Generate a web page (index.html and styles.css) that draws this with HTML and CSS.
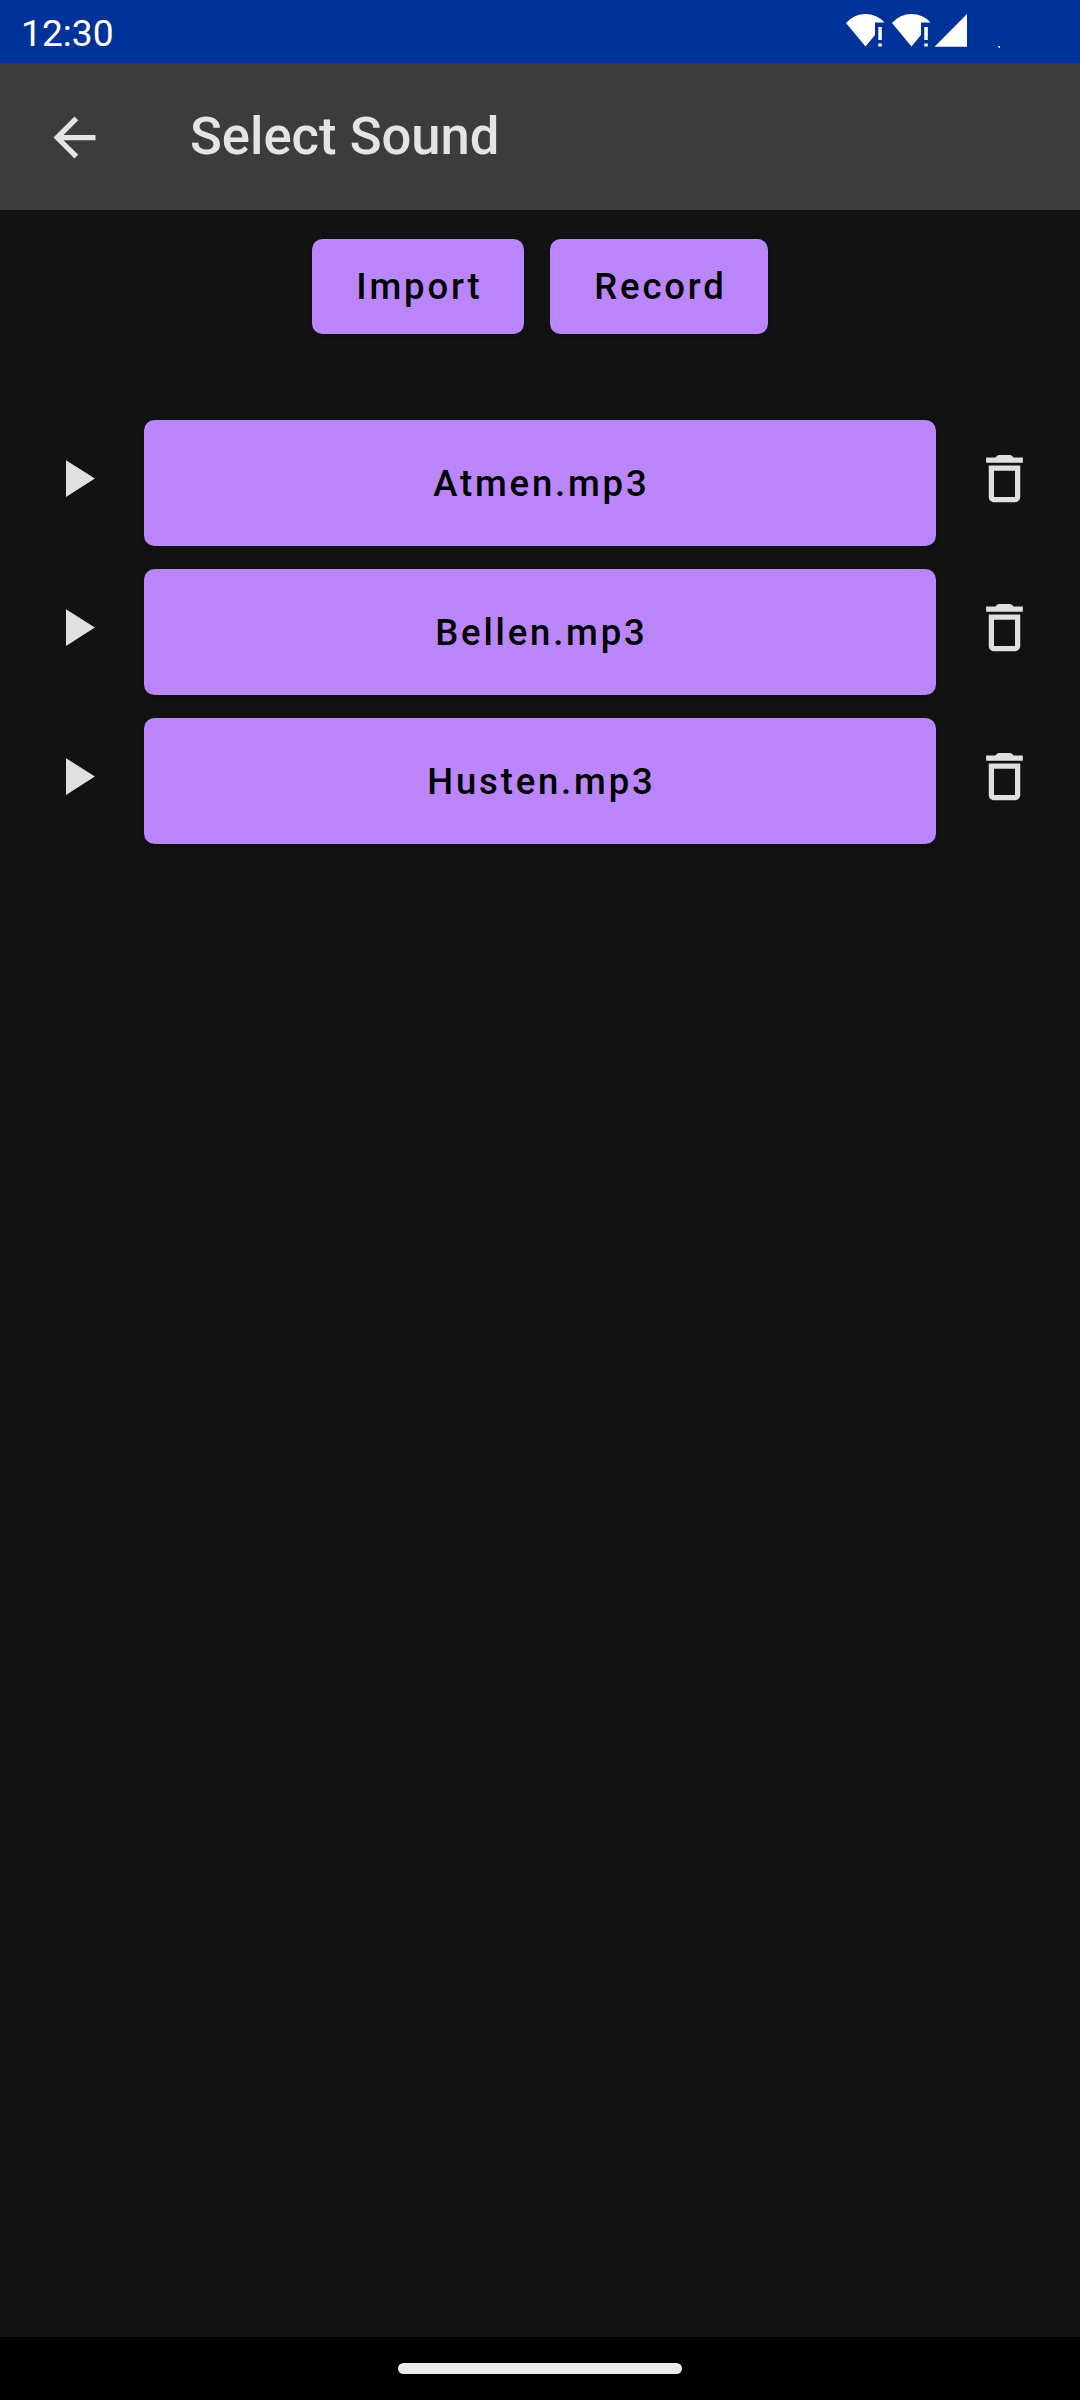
FILE: index.html
```html
<!DOCTYPE html>
<html lang="en">
<head>
<meta charset="utf-8">
<title>Select Sound</title>
<link rel="stylesheet" href="styles.css">
</head>
<body>
<svg class="sprite" aria-hidden="true">
  <symbol id="play" viewBox="0 0 24 24"><path d="M8 5v14l11-7z"/></symbol>
  <symbol id="trash" viewBox="0 0 24 24"><path d="M6 19c0 1.1.9 2 2 2h8c1.1 0 2-.9 2-2V7H6v12zM8 9h8v10H8V9zM15.5 4l-.7-.7c-.2-.2-.5-.3-.7-.3H9.900c-.2 0-.5.1-.7.3L8.500 4H5v2h14V4z"/></symbol>
</svg>
<header class="status">
  <span class="clock">12:30</span>
  <svg class="status-icons" width="156" height="36" viewBox="846 13 156 36">
    <path id="wifi" d="M846 23Q854 14 865.500 14T884.500 22.500H875V35L865.500 46.500ZM878.300 27h3.500v13h-3.500zM878.300 43.500h3.500v3h-3.500z"/>
    <use href="#wifi" x="46"/>
    <path d="M934.500 46.700L967 14V46.700Z"/>
    <path d="M998 46h2v2h-1v-1h-1z"/>
  </svg>
</header>
<nav class="appbar">
  <svg class="back" viewBox="0 0 24 24"><path d="M20 11H7.830l5.590-5.590L12 4l-8 8 8 8 1.410-1.410L7.830 13H20v-2z"/></svg>
  <h1 class="title">Select Sound</h1>
</nav>
<main class="content">
  <div class="actions">
    <button class="btn import">Import</button>
    <button class="btn record">Record</button>
  </div>
  <div class="sounds">
    <div class="row">
      <svg class="icon"><use href="#play"/></svg>
      <button class="btn sound">Atmen.mp3</button>
      <svg class="icon"><use href="#trash"/></svg>
    </div>
    <div class="row">
      <svg class="icon"><use href="#play"/></svg>
      <button class="btn sound">Bellen.mp3</button>
      <svg class="icon"><use href="#trash"/></svg>
    </div>
    <div class="row">
      <svg class="icon"><use href="#play"/></svg>
      <button class="btn sound">Husten.mp3</button>
      <svg class="icon"><use href="#trash"/></svg>
    </div>
  </div>
</main>
<footer class="gesture"><div class="pill"></div></footer>
</body>
</html>
```
FILE: styles.css
```css
* { box-sizing: border-box; }
body {
  margin: 0;
  height: 2400px;
  display: flex;
  flex-direction: column;
  background: #121212;
  font-family: Roboto, sans-serif;
  overflow: hidden;
}
.sprite { display: none; }
.status {
  height: 63px;
  flex: none;
  display: flex;
  justify-content: space-between;
  align-items: flex-start;
  padding: 13px 78px 0 21px;
  background: #003399;
  color: #fff;
}
.clock { font-size: 37.2px; line-height: 41px; }
.status-icons { fill: #fff; }
.appbar {
  height: 147px;
  flex: none;
  display: flex;
  align-items: center;
  padding-left: 42.5px;
  background: #3c3c3c;
}
.back { width: 63px; height: 63px; fill: #e4e4e4; margin-top: 2px; }
.title {
  margin: 0 0 1px 84.5px;
  font-size: 52.6px;
  font-weight: 500;
  line-height: 62px;
  color: #e4e4e4;
}
.content { flex: 1; padding-top: 29px; }
.actions { display: flex; justify-content: center; gap: 26px; }
.btn {
  border: 0;
  padding: 0 0 0 2.8px;
  border-radius: 10.5px;
  background: #bb86fc;
  color: #000;
  font: 500 36.5px/44px Roboto, sans-serif;
  letter-spacing: 2.8px;
  box-shadow: 0 2px 5px rgba(0, 0, 0, .35);
}
.import { width: 212px; height: 95px; }
.record { width: 218px; height: 95px; }
.sounds { display: flex; flex-direction: column; gap: 23px; margin-top: 86px; }
.row { display: flex; align-items: flex-start; padding-left: 45px; }
.icon { width: 63px; height: 63px; margin-top: 27px; fill: #e0e0e0; }
.sound { width: 792px; height: 126px; margin: 0 37px 0 36px; padding-top: 1px; }
.gesture {
  height: 63px;
  flex: none;
  display: flex;
  justify-content: center;
  padding-top: 26px;
  background: #000;
}
.pill { width: 284px; height: 11px; border-radius: 6px; background: #ebebeb; }
```
